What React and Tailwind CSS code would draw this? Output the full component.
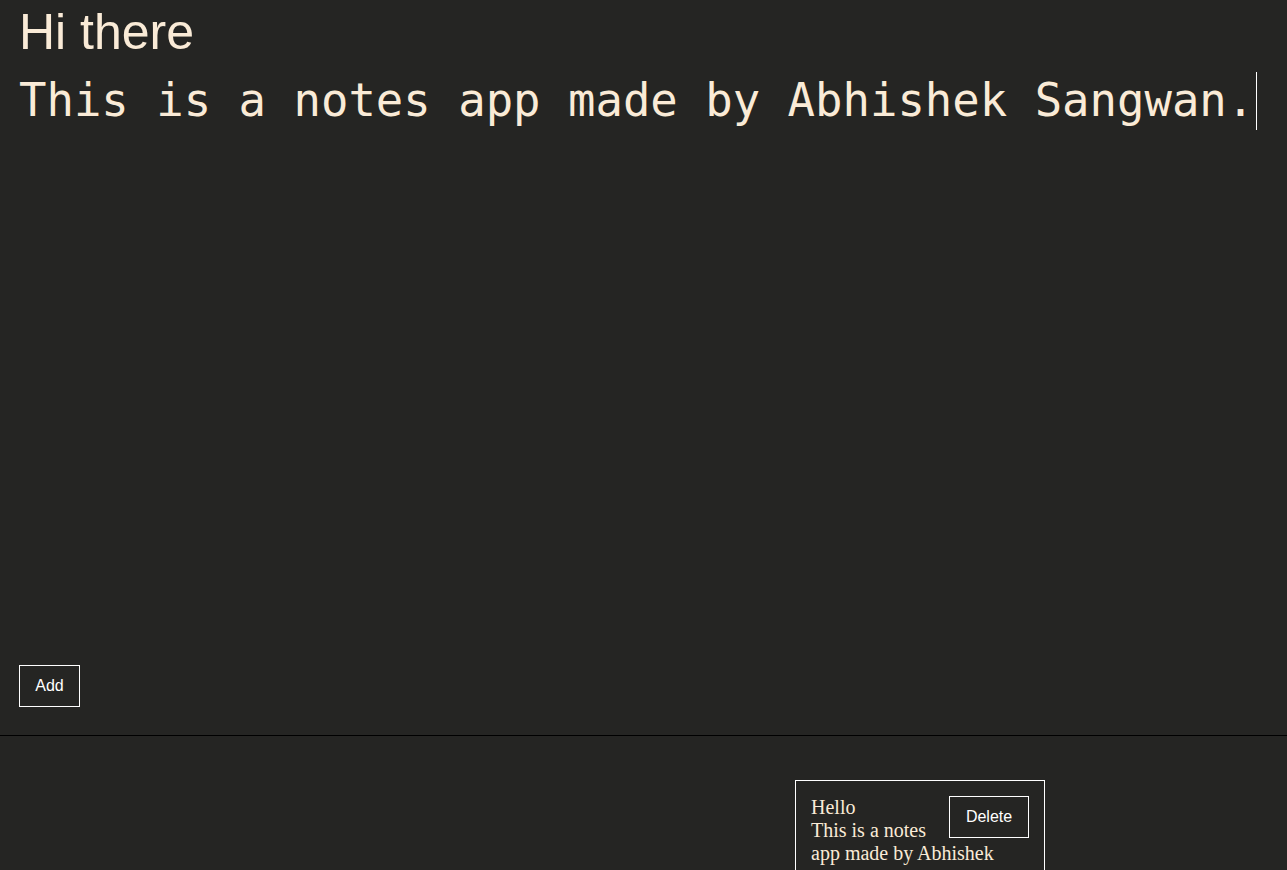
import React from 'react';

const notes = [
  { id: 1, title: 'Hello', body: 'This is a notes app made by Abhishek' },
];

const App = () => {
  return (
    <div className="min-h-screen w-full bg-[#252523] text-[#faebd7] overflow-hidden">
      {/* Editor */}
      <div className="flex h-[736px] flex-col border-b border-black px-[19px]">
        <div className="mt-[4px] font-['Liberation_Sans',Arial,sans-serif] text-[50px] leading-[57.5px]">
          Hi there
        </div>
        <div className="mt-[10px] flex-1 whitespace-nowrap font-['DejaVu_Sans_Mono',monospace] text-[45.6px] leading-[58px]">
          This is a notes app made by Abhishek Sangwan.
          <span className="ml-[2px] inline-block h-[58px] w-px bg-white align-top" />
        </div>
        <button className="mb-[28px] h-[42px] w-[61px] self-start border border-white font-['Liberation_Sans',Arial,sans-serif] text-[16px] text-white">
          Add
        </button>
      </div>

      {/* Notes list */}
      <div className="flex pt-[44px] pl-[795px]">
        {notes.map((note) => (
          <div
            key={note.id}
            className="w-[250px] border border-white p-[15px] font-['Liberation_Serif','Times_New_Roman',serif] text-[20px] leading-[23px]"
          >
            <button className="float-right ml-[8px] h-[42px] w-[80px] border border-white font-['Liberation_Sans',Arial,sans-serif] text-[16px] leading-[18px] text-white">
              Delete
            </button>
            <div>{note.title}</div>
            <div>{note.body}</div>
          </div>
        ))}
      </div>
    </div>
  );
};

export default App;
